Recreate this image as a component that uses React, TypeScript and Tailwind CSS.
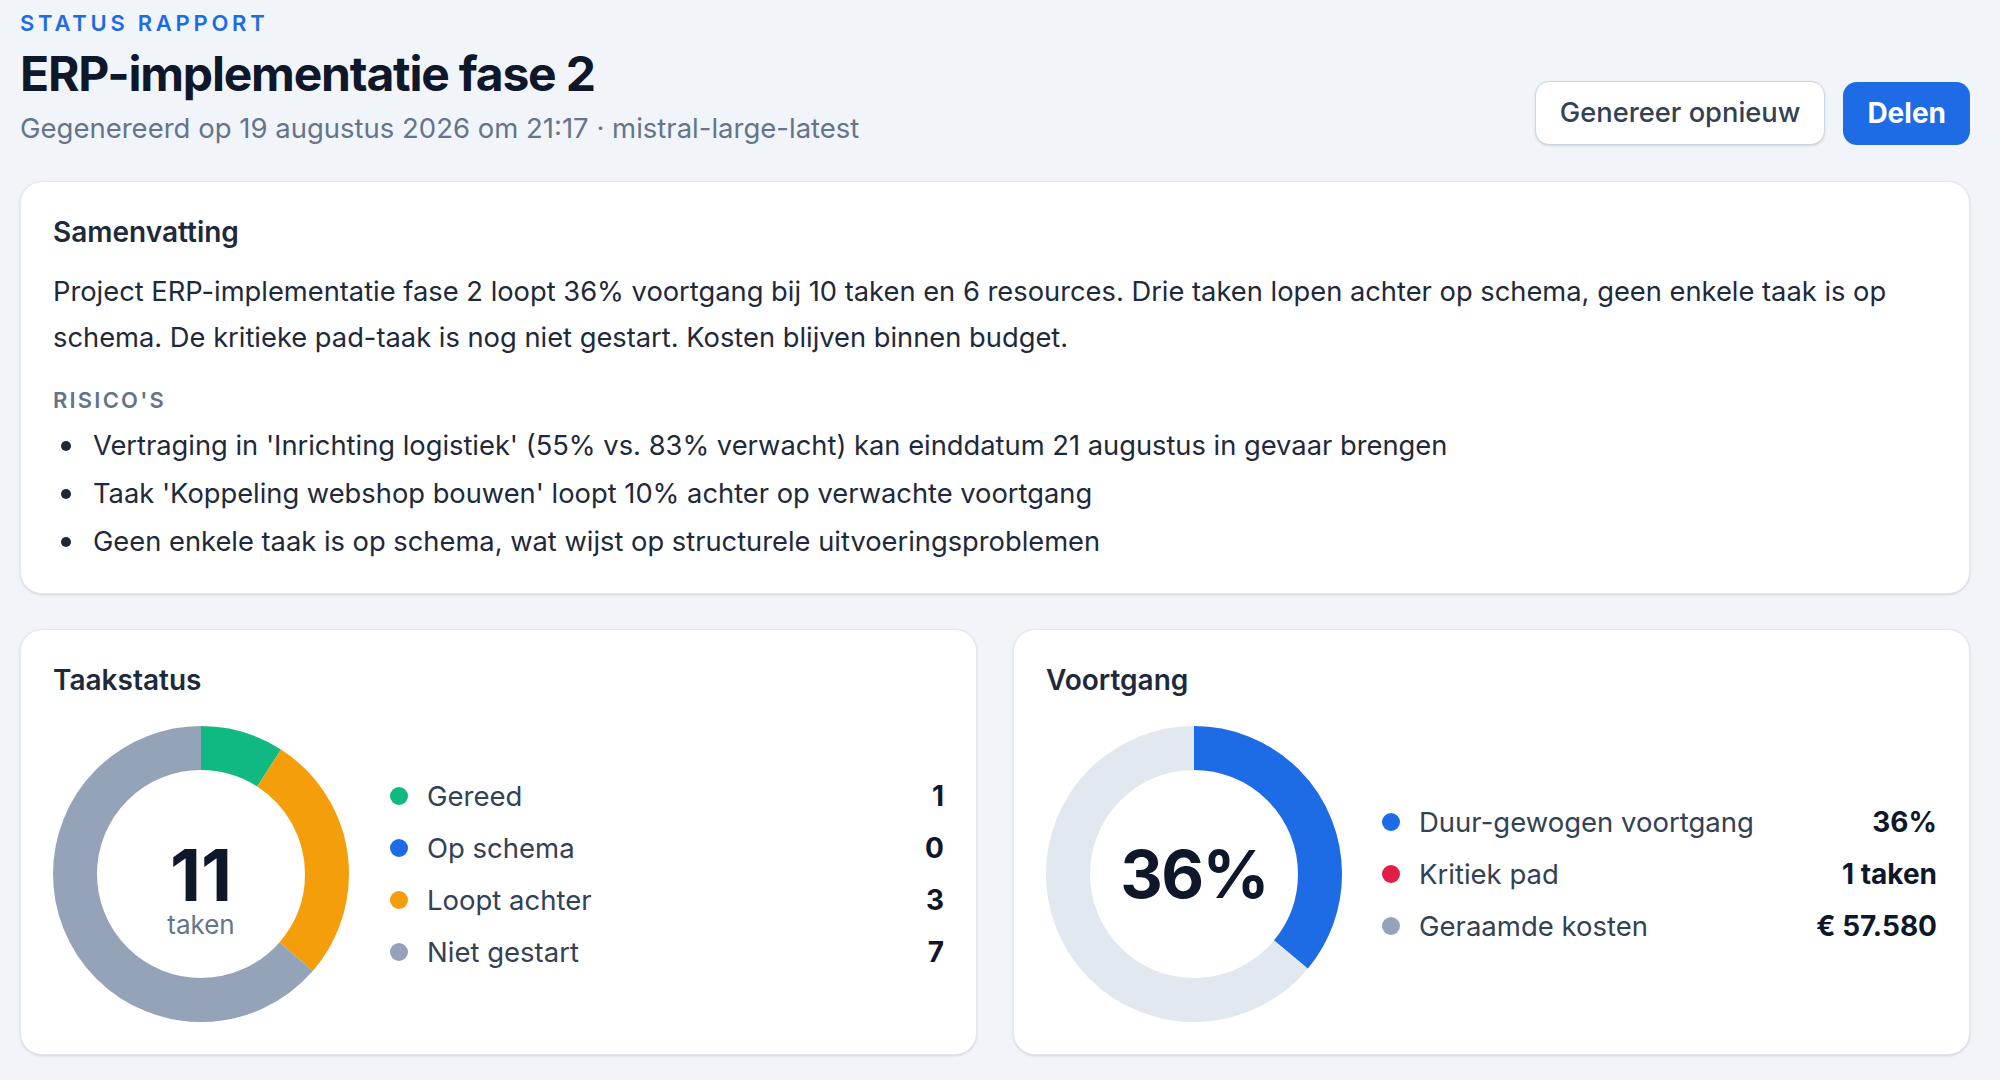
import React from "react";

type Segment = { value: number; color: string };

const BLUE = "#1d6ce5";

function Donut({ segments, total, track }: { segments: Segment[]; total: number; track?: string }) {
  const size = 296;
  const stroke = 44;
  const r = (size - stroke) / 2;
  const c = 2 * Math.PI * r;
  let offset = 0;
  return (
    <svg width={size} height={size} viewBox={`0 0 ${size} ${size}`} className="-rotate-90">
      {track && (
        <circle cx={size / 2} cy={size / 2} r={r} fill="none" stroke={track} strokeWidth={stroke} />
      )}
      {segments.map((s, i) => {
        const len = (s.value / total) * c;
        const el = (
          <circle
            key={i}
            cx={size / 2}
            cy={size / 2}
            r={r}
            fill="none"
            stroke={s.color}
            strokeWidth={stroke}
            strokeDasharray={`${len} ${c - len}`}
            strokeDashoffset={-offset}
          />
        );
        offset += len;
        return s.value > 0 ? el : null;
      })}
    </svg>
  );
}

function LegendRow({ color, label, value }: { color: string; label: string; value: string }) {
  return (
    <div className="flex items-center justify-between leading-[36px]">
      <div className="flex items-center gap-[19px]">
        <span className="w-[18px] h-[18px] rounded-full" style={{ backgroundColor: color }} />
        <span className="text-[27.5px] text-[#334155]">{label}</span>
      </div>
      <span className="text-[28px] font-bold text-[#0f172a]">{value}</span>
    </div>
  );
}

export default function App() {
  const taakstatus = [
    { label: "Gereed", value: 1, color: "#10b981" },
    { label: "Op schema", value: 0, color: BLUE },
    { label: "Loopt achter", value: 3, color: "#f59e0b" },
    { label: "Niet gestart", value: 7, color: "#94a3b8" },
  ];

  const risicos = [
    "Vertraging in 'Inrichting logistiek' (55% vs. 83% verwacht) kan einddatum 21 augustus in gevaar brengen",
    "Taak 'Koppeling webshop bouwen' loopt 10% achter op verwachte voortgang",
    "Geen enkele taak is op schema, wat wijst op structurele uitvoeringsproblemen",
  ];

  return (
    <div className="min-h-screen bg-[#f1f5f9] pl-5 pr-[30px] pt-[11px] pb-6 font-['Inter',sans-serif]">
      {/* header */}
      <div className="flex items-end justify-between">
        <div>
          <p className="text-[22px] leading-[24px] font-semibold tracking-[0.17em] uppercase text-[#1d6ce5]">
            Status rapport
          </p>
          <h1 className="mt-[11px] text-[48px] leading-[56px] font-bold tracking-tight text-[#0f172a]">
            ERP-implementatie fase 2
          </h1>
          <p className="mt-[8px] text-[27.5px] leading-[36px] text-[#64748b]">
            Gegenereerd op 19 augustus 2026 om 21:17 · mistral-large-latest
          </p>
        </div>
        <div className="flex items-center gap-[18px] mb-[1px]">
          <button className="h-[64px] px-[24px] rounded-[14px] border border-[#cbd5e1] bg-white text-[27.3px] font-medium text-[#334155] shadow-sm">
            Genereer opnieuw
          </button>
          <button className="h-[63px] px-[24px] rounded-[14px] bg-[#1d6ce5] text-[28px] font-bold text-white">
            Delen
          </button>
        </div>
      </div>

      {/* samenvatting */}
      <div className="mt-[35px] rounded-[22px] border border-[#e2e8f0] bg-white px-[32px] pt-[32px] pb-[27px] shadow-sm">
        <h2 className="text-[28px] leading-[36px] font-semibold text-[#1e293b]">Samenvatting</h2>
        <p className="mt-[19px] text-[27.3px] leading-[46px] text-[#1e293b]">
          Project ERP-implementatie fase 2 loopt 36% voortgang bij 10 taken en 6 resources. Drie taken lopen
          achter op schema, geen enkele taak is op schema. De kritieke pad-taak is nog niet gestart. Kosten
          blijven binnen budget.
        </p>
        <p className="mt-[25px] text-[22px] leading-[28px] font-semibold tracking-[0.1em] uppercase text-[#64748b]">
          Risico's
        </p>
        <ul className="mt-[8px] text-[27.3px] leading-[48px] text-[#1e293b]">
          {risicos.map((r) => (
            <li key={r} className="flex items-center">
              <span className="ml-[8px] mr-[22px] w-[10px] h-[10px] shrink-0 rounded-full bg-[#1e293b]" />
              <span>{r}</span>
            </li>
          ))}
        </ul>
      </div>

      {/* grafieken */}
      <div className="mt-[35px] grid grid-cols-2 gap-[36px]">
        <div className="rounded-[22px] border border-[#e2e8f0] bg-white p-[32px] shadow-sm">
          <h2 className="text-[28px] leading-[36px] font-semibold text-[#1e293b]">Taakstatus</h2>
          <div className="mt-[28px] flex items-center gap-[41px]">
            <div className="relative shrink-0">
              <Donut segments={taakstatus} total={11} />
              <div className="absolute inset-0 flex flex-col items-center justify-center pt-[30px]">
                <span className="text-[72px] leading-[72px] font-bold text-[#0f172a]">11</span>
                <span className="text-[26px] leading-[28px] text-[#64748b]">taken</span>
              </div>
            </div>
            <div className="flex-1 flex flex-col gap-[16px]">
              {taakstatus.map((t) => (
                <LegendRow key={t.label} color={t.color} label={t.label} value={String(t.value)} />
              ))}
            </div>
          </div>
        </div>

        <div className="rounded-[22px] border border-[#e2e8f0] bg-white p-[32px] shadow-sm">
          <h2 className="text-[28px] leading-[36px] font-semibold text-[#1e293b]">Voortgang</h2>
          <div className="mt-[28px] flex items-center gap-[40px]">
            <div className="relative shrink-0">
              <Donut segments={[{ value: 36, color: BLUE }]} total={100} track="#e2e8f0" />
              <div className="absolute inset-0 flex items-center justify-center">
                <span className="text-[66px] leading-[70px] font-bold tracking-tight text-[#0f172a]">36%</span>
              </div>
            </div>
            <div className="flex-1 flex flex-col gap-[16px]">
              <LegendRow color={BLUE} label="Duur-gewogen voortgang" value="36%" />
              <LegendRow color="#e11d48" label="Kritiek pad" value="1 taken" />
              <LegendRow color="#94a3b8" label="Geraamde kosten" value="€ 57.580" />
            </div>
          </div>
        </div>
      </div>
    </div>
  );
}
